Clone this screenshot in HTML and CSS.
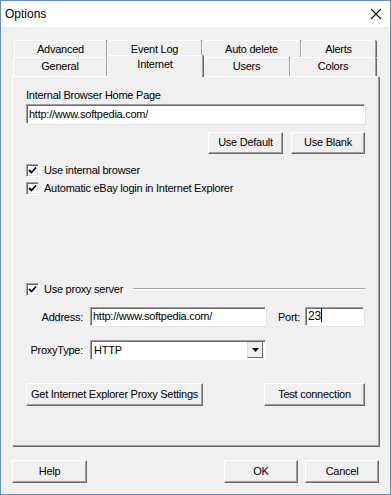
FILE: index.html
```html
<!DOCTYPE html>
<html lang="en">
<head>
  <meta charset="UTF-8">
  <title>Options</title>
  <link rel="stylesheet" href="styles.css">
</head>
<body>
  <div class="window">
    <div class="titlebar">
      <span class="title">Options</span>
      <svg class="close" width="12" height="12" viewBox="0 0 12 12"><path d="M1 1 L11 11 M11 1 L1 11" stroke="#000" stroke-width="1.1" fill="none"/></svg>
    </div>

    <div class="body">
      <div class="tabs">
        <div class="tab-row back">
          <div class="tab" style="width:93px">Advanced</div>
          <div class="tab" style="width:95px">Event Log</div>
          <div class="tab" style="width:99px">Auto delete</div>
          <div class="tab" style="width:75px">Alerts</div>
        </div>
        <div class="tab-row front">
          <div class="tab" style="width:94px">General</div>
          <div class="tab selected" style="width:96px">Internet</div>
          <div class="tab" style="width:87px">Users</div>
          <div class="tab" style="width:86px">Colors</div>
        </div>
      </div>

      <div class="panel">
        <div class="label">Internal Browser Home Page</div>
        <div class="input wide">http://www.softpedia.com/</div>

        <div class="btn-row">
          <div class="btn" style="width:75px">Use Default</div>
          <div class="btn" style="width:74px">Use Blank</div>
        </div>

        <div class="check first"><span class="box"><svg width="9" height="9" viewBox="0 0 9 9"><path d="M1 4 L3.5 6.5 L8 1.5" stroke="#000" stroke-width="1.8" fill="none"/></svg></span>Use internal browser</div>
        <div class="check"><span class="box"><svg width="9" height="9" viewBox="0 0 9 9"><path d="M1 4 L3.5 6.5 L8 1.5" stroke="#000" stroke-width="1.8" fill="none"/></svg></span>Automatic eBay login in Internet Explorer</div>

        <div class="check proxy"><span class="box"><svg width="9" height="9" viewBox="0 0 9 9"><path d="M1 4 L3.5 6.5 L8 1.5" stroke="#000" stroke-width="1.8" fill="none"/></svg></span>Use proxy server<span class="rule"></span></div>

        <div class="field-row address">
          <span class="field-label">Address:</span>
          <div class="input addr">http://www.softpedia.com/</div>
          <span class="port-label">Port:</span>
          <div class="input port">23<span class="caret"></span></div>
        </div>

        <div class="field-row type">
          <span class="field-label">ProxyType:</span>
          <div class="select">
            <span>HTTP</span>
            <span class="drop"><svg width="7" height="4" viewBox="0 0 7 4"><path d="M0 0 H7 L3.5 4 Z" fill="#000"/></svg></span>
          </div>
        </div>

        <div class="proxy-buttons">
          <div class="btn" style="width:177px">Get Internet Explorer Proxy Settings</div>
          <div class="btn" style="width:101px">Test connection</div>
        </div>
      </div>

      <div class="footer-buttons">
        <div class="btn" style="width:75px">Help</div>
        <div class="right">
          <div class="btn" style="width:74px">OK</div>
          <div class="btn" style="width:74px">Cancel</div>
        </div>
      </div>
    </div>
  </div>
</body>
</html>
```

FILE: styles.css
```css
body {
  margin: 0;
  padding: 0;
  font-family: 'Liberation Sans', Arial, sans-serif;
  font-size: 11px;
  letter-spacing: -0.25px;
  color: #000;
  background: #fff;
}
.window {
  width: 391px;
  height: 495px;
  box-sizing: border-box;
  border: 1px solid #6a8cc9;
  display: flex;
  flex-direction: column;
  background: #f0f0f0;
}
.titlebar {
  height: 26px;
  background: #fff;
  display: flex;
  align-items: center;
  justify-content: space-between;
  padding: 0 8px 0 4px;
}
.title {
  font-size: 12px;
  letter-spacing: 0;
}
.body {
  flex: 1;
  padding: 13px 10px 0 11px;
}

/* tabs */
.tab-row {
  display: flex;
}
.tab-row.back {
  margin-left: 2px;
  height: 17px;
}
.tab-row.front {
  margin-left: 1px;
  height: 19px;
}
.tab {
  box-sizing: border-box;
  height: 100%;
  border-top: 1px solid #fff;
  border-left: 1px solid #fff;
  border-right: 1px solid #a0a0a0;
  box-shadow: 1px 0 0 #696969;
  border-radius: 2px 2px 0 0;
  text-align: center;
  line-height: 17px;
  background: #f0f0f0;
  position: relative;
}
.tab-row.back .tab {
  line-height: 16px;
}
.tab.selected {
  margin-top: -2px;
  height: 22px;
  line-height: 16px;
  z-index: 2;
}

/* panel */
.panel {
  box-sizing: border-box;
  width: 367px;
  height: 370px;
  border-top: 1px solid #fff;
  border-left: 1px solid #fff;
  border-right: 1px solid #a0a0a0;
  border-bottom: 1px solid #a0a0a0;
  box-shadow: 1px 1px 0 #696969;
  padding: 11px 13px 0 13px;
  position: relative;
  z-index: 1;
}
.label {
  height: 16px;
  line-height: 15px;
}
.input {
  box-sizing: border-box;
  background: #fff;
  border-top: 1px solid #a0a0a0;
  border-left: 1px solid #a0a0a0;
  border-right: 1px solid #fff;
  border-bottom: 1px solid #fff;
  box-shadow: inset 1px 1px 0 #696969, 1px 1px 0 #e3e3e3;
  padding: 0 2px;
  white-space: nowrap;
  overflow: hidden;
}
.input.wide {
  height: 20px;
  line-height: 18px;
}
.btn-row {
  display: flex;
  justify-content: flex-end;
  gap: 8px;
  margin-top: 8px;
}
.btn {
  box-sizing: border-box;
  height: 23px;
  line-height: 20px;
  text-align: center;
  background: #f0f0f0;
  border-top: 1px solid #fff;
  border-left: 1px solid #fff;
  border-right: 1px solid #696969;
  border-bottom: 1px solid #696969;
  box-shadow: inset -1px -1px 0 #a0a0a0;
  white-space: nowrap;
}
.btn-row .btn {
  height: 22px;
  line-height: 19px;
}

/* checkboxes */
.check {
  display: flex;
  align-items: center;
  height: 18px;
}
.check.first {
  margin-top: 7px;
}
.check.proxy {
  margin-top: 83px;
}
.box {
  box-sizing: border-box;
  width: 13px;
  height: 13px;
  margin-right: 5px;
  background: #fff;
  border-top: 1px solid #a0a0a0;
  border-left: 1px solid #a0a0a0;
  border-right: 1px solid #fff;
  border-bottom: 1px solid #fff;
  box-shadow: inset 1px 1px 0 #696969, inset -1px -1px 0 #e3e3e3;
  display: flex;
  align-items: center;
  justify-content: center;
}
.rule {
  flex: 1;
  margin-left: 10px;
  border-top: 1px solid #a0a0a0;
  border-bottom: 1px solid #fff;
}

/* proxy fields */
.field-row {
  display: flex;
  align-items: center;
}
.field-row.address {
  margin-top: 9px;
  height: 19px;
}
.field-row.type {
  margin-top: 14px;
  height: 20px;
}
.field-label {
  width: 64px;
  padding-right: 7px;
  box-sizing: border-box;
  text-align: right;
}
.input.addr {
  width: 176px;
  height: 19px;
  line-height: 17px;
}
.port-label {
  margin-left: 12px;
  width: 27px;
}
.input.port {
  width: 59px;
  height: 19px;
  line-height: 17px;
  font-size: 12px;
}
.caret {
  display: inline-block;
  width: 1px;
  height: 14px;
  background: #000;
  vertical-align: -2px;
}
.select {
  box-sizing: border-box;
  width: 176px;
  height: 20px;
  background: #fff;
  border-top: 1px solid #a0a0a0;
  border-left: 1px solid #a0a0a0;
  border-right: 1px solid #fff;
  border-bottom: 1px solid #fff;
  box-shadow: inset 1px 1px 0 #696969;
  display: flex;
  align-items: center;
  justify-content: space-between;
  padding: 2px 2px 2px 3px;
}
.drop {
  box-sizing: border-box;
  width: 16px;
  height: 16px;
  background: #f0f0f0;
  border-top: 1px solid #e3e3e3;
  border-left: 1px solid #e3e3e3;
  border-right: 1px solid #696969;
  border-bottom: 1px solid #696969;
  display: flex;
  align-items: center;
  justify-content: center;
}
.proxy-buttons {
  display: flex;
  justify-content: space-between;
  margin-top: 23px;
}

/* dialog buttons */
.footer-buttons {
  display: flex;
  justify-content: space-between;
  margin-top: 14px;
  margin-right: 1px;
}
.footer-buttons .right {
  display: flex;
  gap: 7px;
}
```
